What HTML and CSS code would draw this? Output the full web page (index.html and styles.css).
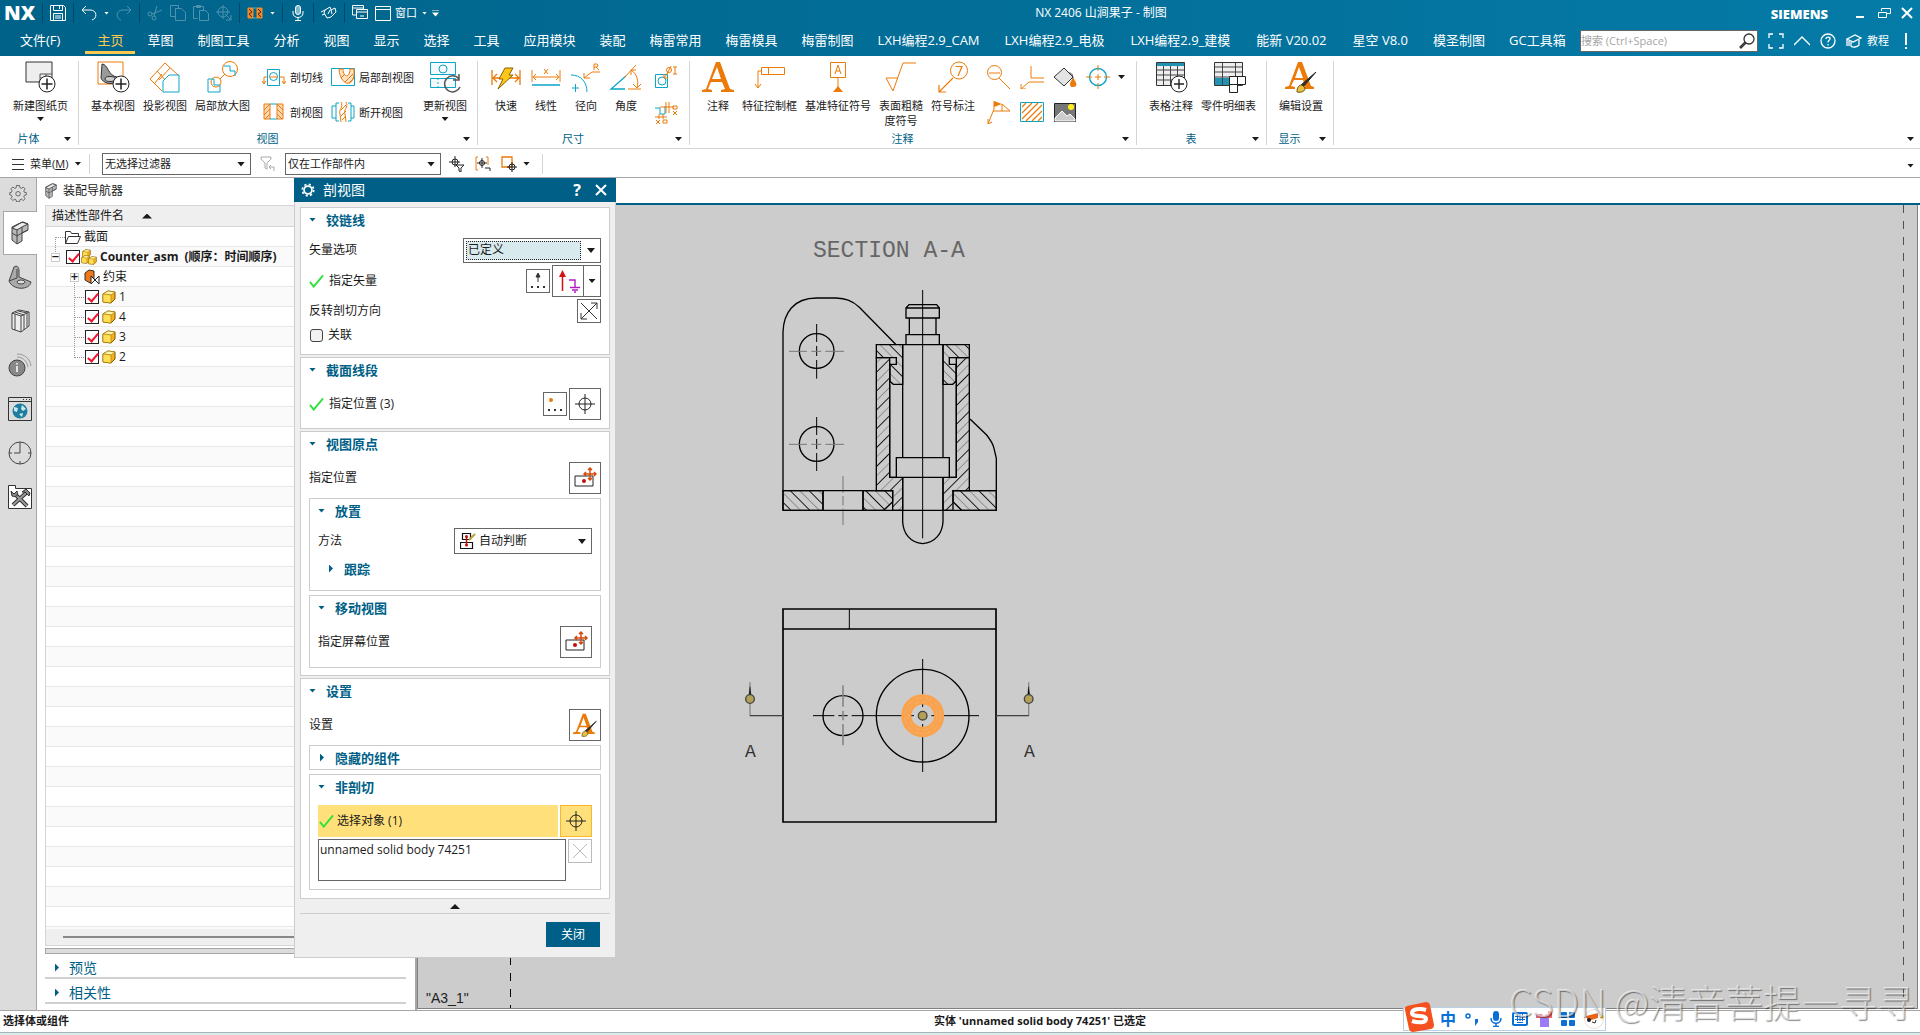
FILE: index.html
```html
<!DOCTYPE html>
<html lang="zh-CN">
<head>
<meta charset="utf-8">
<title>NX 2406 山涧果子 - 制图</title>
<link rel="stylesheet" href="styles.css">
</head>
<body>
<svg class="defs" aria-hidden="true">
  <symbol id="i-check" viewBox="0 0 16 14"><path d="M1 8l4 5L15 1" fill="none" stroke="#2fe23a" stroke-width="2"/></symbol>
  <symbol id="i-cube" viewBox="0 0 14 14"><path d="M1 4l5-3 7 1v7l-4 4-8-1z" fill="#f2b31c" stroke="#7d5500"/><path d="M1 4l5-3 7 1-4 3z" fill="#fff3a8" stroke="#a87800" stroke-width=".6"/><path d="M1 4l8 1v8l-8-1z" fill="#ffdf57" stroke="#a87800" stroke-width=".6"/></symbol>
  <symbol id="i-cross" viewBox="0 0 24 24"><g fill="none" stroke="#222"><circle cx="12" cy="12" r="6"/><path d="M12 2v20M2 12h20"/></g></symbol>
  <symbol id="i-cubes" viewBox="0 0 18 24"><path d="M1 11v8l5 4 5-3v-8l6-3V3l-5-2-5 2-6 3z" fill="#b9b9b9" stroke="#444"/><path d="M2 7l9-5 5 1-10 5z" fill="#eee"/><path d="M1 7l5-3 5-3 6 2-6 3v6l-5 3-5-3M6 15v8M11 6l-5 3-5-2M6 9v6M11 12l6-3" fill="none" stroke="#444"/></symbol>
  <symbol id="i-brushA" viewBox="0 0 32 32"><path d="M0 28v-2l4-1L13 1h4l9 24 3 1v2H16v-2l4-1-2-6H9l-3 6 4 1v2zM10 17h8L14 6z" fill="#ec7a08" fill-rule="evenodd"/><path d="M31 11L18 26l-2-2z" fill="#333" stroke="#222"/><path d="M12 31c0-5 2-7 5-7l3 3c0 3-3 5-8 4z" fill="#e8c042" stroke="#6b5310"/></symbol>
  <symbol id="i-move" viewBox="0 0 24 22"><path d="M2 9h18v10H2z" fill="#fff" stroke="#222"/><circle cx="11" cy="14" r="2" fill="#c40d0d"/><path d="M17 1v12M11 7h12M15 3l2-2 2 2M15 11l2 2 2-2M13 5l-2 2 2 2M21 5l2 2-2 2" fill="none" stroke="#d8480d" stroke-width="1.5"/></symbol>
</svg>

<header class="top">
  <div class="titlebar">
    <span class="brand">NX</span>
    <div class="quick">
      <i class="vsep"></i>
      <button aria-label="保存"><svg viewBox="0 0 16 16"><path d="M.5.5h13l2 2v13H.5zM3.5.5v5h9v-5M9.500 1v3M3.500 15V8.500h9V15M5 11h6M5 13h6"/></svg></button>
      <i class="vsep"></i>
      <button aria-label="撤消"><svg viewBox="0 0 16 16"><path d="M5 1L1 5l4 4M1 5h8c8 0 7 9 2 10"/></svg></button>
      <i class="dd light"></i>
      <button aria-label="重做" class="dim"><svg viewBox="0 0 16 16"><path d="M11 1l4 4-4 4M15 5H7c-8 0-7 9-2 10"/></svg></button>
      <i class="vsep"></i>
      <button aria-label="剪切" class="dim"><svg viewBox="0 0 16 16"><circle cx="3" cy="9" r="2"/><circle cx="7" cy="13" r="2"/><path d="M5 9l10-4M7 11l3-10"/></svg></button>
      <button aria-label="复制" class="dim"><svg viewBox="0 0 16 16"><path d="M5.500 11.500h-5V.5h8v3M5.500 3.500h6l4 4v8h-10z"/></svg></button>
      <button aria-label="粘贴" class="dim"><svg viewBox="0 0 16 16"><path d="M4.500 13.500h-4v-12h10v4M3.500.5h4v2h-4zM6.500 5.500h6l3 3v7h-9z"/></svg></button>
      <button aria-label="重复" class="dim"><svg viewBox="0 0 16 16"><circle cx="7" cy="7" r="5"/><path d="M7 0v14M0 7h14M9 9l6 6v-5M15 15h-5"/></svg></button>
      <i class="vsep"></i>
      <button aria-label="剖视图"><svg viewBox="0 0 16 16"><path d="M1 3h5v10H1zM10 3h5v10h-5z" fill="#f58220" stroke="#fa8c1d"/><path d="M6 3h4M6 13h4" stroke="#1dc0e8"/><path d="M2 4l3 3-3 2 3 3M11 4l3 3-3 2 3 3" stroke="#333"/></svg></button>
      <i class="dd light"></i>
      <i class="vsep"></i>
      <button aria-label="语音"><svg viewBox="0 0 16 16"><rect x="5.500" y=".5" width="5" height="9" rx="2.500" fill="#7fb7cd"/><path d="M3 6v2c0 6 10 6 10 0V6M8 12v3M5 15.500h6"/></svg></button>
      <i class="vsep"></i>
      <button aria-label="触控"><svg viewBox="0 0 16 16"><path d="M4 5l5-3 1 3 4-2 1 4-5 5-4 1-3-5zM0 7l4-2M1 10l3-1M9 5L7 9M10 5l1 4"/></svg></button>
      <i class="vsep"></i>
      <button aria-label="切换窗口"><svg viewBox="0 0 16 16"><path d="M4 10H.5V.5h11V4M.5 3h11M4.500 4.500h11v9h-11zM4.500 7h11M8 11h4"/></svg></button>
      <button class="win" aria-label="窗口"><svg viewBox="0 0 16 16"><path d="M.5 1.500h15v14H.5zM.5 4.500h15"/></svg>窗口</button>
      <i class="dd light"></i><i class="dd light bar"></i>
    </div>
    <h1>NX 2406 山涧果子 - 制图</h1>
    <div class="sys">
      <b>SIEMENS</b>
      <button aria-label="最小化"><svg viewBox="0 0 14 14"><path d="M2 11h8" stroke-width="2"/></svg></button>
      <button aria-label="还原"><svg viewBox="0 0 14 14"><path d="M4.500 5V2.500h9v5H10M1.500 6.500h8v5h-8z"/></svg></button>
      <button aria-label="关闭窗口"><svg viewBox="0 0 14 14"><path d="M2 2l10 10M12 2L2 12" stroke-width="2"/></svg></button>
    </div>
  </div>
  <nav class="tabs">
    <a href="#" class="file">文件(F)</a><a href="#" class="on">主页</a><a href="#">草图</a><a href="#">制图工具</a><a href="#">分析</a><a href="#">视图</a><a href="#">显示</a><a href="#">选择</a><a href="#">工具</a><a href="#">应用模块</a><a href="#">装配</a><a href="#">梅雷常用</a><a href="#">梅雷模具</a><a href="#">梅雷制图</a><a href="#">LXH编程2.9_CAM</a><a href="#" class="wide">LXH编程2.9_电极</a><a href="#" class="wide">LXH编程2.9_建模</a><a href="#" class="wide">能新 V20.02</a><a href="#" class="wide">星空 V8.0</a><a href="#">模圣制图</a><a href="#">GC工具箱</a>
    <div class="help">
      <label class="search"><input type="text" placeholder="搜索 (Ctrl+Space)" aria-label="搜索"><svg viewBox="0 0 16 16"><circle cx="10" cy="6" r="5" fill="none" stroke="#333"/><path d="M6 9l-5 5 1 1 5-5" fill="none" stroke="#333"/></svg></label>
      <button aria-label="全屏"><svg viewBox="0 0 16 16"><path d="M1 5V1h4M11 1h4v4M15 11v4h-4M5 15H1v-4"/></svg></button>
      <button aria-label="折叠功能区"><svg viewBox="0 0 16 16"><path d="M0 12l8-8 8 8"/></svg></button>
      <button aria-label="帮助"><svg viewBox="0 0 16 16"><circle cx="8" cy="8" r="7"/><path d="M6 6c0-3 5-2 4 0-1 2-2 1-2 3.500M8 11v1.500"/></svg></button>
      <button aria-label="教程" class="tut"><svg viewBox="0 0 16 16"><path d="M1 6l8-4 6 3-8 4zM5 9v4c2 2 6 1 8-1V7M1 6v7M3 8v5"/></svg>教程</button>
      <button aria-label="提示" class="bang"><svg viewBox="0 0 4 16"><path d="M2 0v12M2 14v2" stroke-width="2"/></svg></button>
    </div>
  </nav>
</header>

<section class="ribbon">
  <div class="group">
    <div class="tools first">
      <button class="tool"><svg viewBox="0 0 32 32"><path d="M1 1h26v20H1z" fill="#eee" stroke="#333"/><path d="M15 21v-8h12M15 17h12M21 13v8" fill="none" stroke="#555"/><circle cx="22" cy="23" r="8" fill="#fff" stroke="#222"/><path d="M22 17.500v11M16.500 23h11" stroke="#222" stroke-width="1.500"/></svg><span>新建图纸页</span><i class="dd"></i></button>
    </div>
    <div class="foot"><span>片体</span><i class="dd"></i></div>
  </div>
  <div class="group">
    <div class="tools">
      <button class="tool"><svg viewBox="0 0 32 32"><path d="M1 1h25v22H1z" fill="none" stroke="#ec7a08"/><path d="M5 3c6 0 6 12 15 13v4c-6 5-14 2-16-3z" fill="#9a9a9a" stroke="#333"/><ellipse cx="13" cy="18" rx="5" ry="2.500" fill="#ccc" stroke="#333"/><circle cx="24" cy="23" r="8" fill="#fff" stroke="#222"/><path d="M24 17.500v11M18.500 23h11" stroke="#222" stroke-width="1.500"/></svg><span>基本视图</span></button>
      <button class="tool"><svg viewBox="0 0 32 32" fill="none"><path d="M1 18L16 2l13 12-4 3M1 18l12 12M8 10l12 13M13 13l-7 9M21 7L10 19" stroke="#ec7a08"/><path d="M14 20l6-6h10v17H14z" fill="#fff" stroke="#0aa5c8"/></svg><span>投影视图</span></button>
      <button class="tool"><svg viewBox="0 0 32 32" fill="none"><circle cx="23" cy="8" r="7.500" stroke="#ec7a08"/><circle cx="9" cy="21" r="5" stroke="#ec7a08"/><path d="M13 18l5-5" stroke="#ec7a08"/><path d="M17 5h6v5h5v5M1 31V18h6v6h6v7z" stroke="#0aa5c8"/></svg><span>局部放大图</span></button>
      <div class="pair">
        <button><svg viewBox="0 0 24 24" fill="none"><path d="M5.500 4.500h12v16h-12z" stroke="#0aa5c8"/><circle cx="11.500" cy="11.500" r="4" stroke="#0aa5c8"/><path d="M5 12H2v6M18 12h4v6M0 16l2 3 2-3M20 16l2 3 2-3M8 12h8" stroke="#ec7a08"/></svg>剖切线</button>
        <button><svg viewBox="0 0 24 24" fill="none"><path d="M2 4h6v15H2zM15 4h6v15h-6z" fill="#ffd9b5" stroke="#ec7a08"/><path d="M2 10l6-6M2 15l6-6M3 19l5-5M15 4l6 6M15 9l6 6M15 14l5 5" stroke="#ec7a08"/><path d="M8 4h7M8 19h7" stroke="#0aa5c8"/></svg>剖视图</button>
      </div>
      <div class="pair">
        <button><svg viewBox="0 0 24 24" fill="none"><path d="M.5 3.500h23v17H.5z" stroke="#0aa5c8"/><path d="M8 4c1 16 14 20 15 5V4h-4c0 9-7 9-7 0z" fill="#ffe3c8" stroke="#ec7a08"/><path d="M10 13l4-4M14 17l8-8M18 18l5-5" stroke="#ec7a08"/></svg>局部剖视图</button>
        <button><svg viewBox="0 0 24 24" fill="none"><path d="M8 3H5v18h3M5 6H1v12h4M17 3h3v18h-3M20 6h3v12h-3" stroke="#0aa5c8"/><path d="M10 2c3 5-3 8-1 12l1 8M15 2c3 5-3 8-1 12l1 8M10 10l5-5M10 16l5-5M11 20l4-4" stroke="#ec7a08"/></svg>断开视图</button>
      </div>
      <button class="tool"><svg viewBox="0 0 32 32" fill="none"><path d="M1.500 1.500h25v12h-25zM1.500 17.500h25v9h-25z" fill="#f5fbfd" stroke="#0aa5c8"/><circle cx="14" cy="8" r="4" stroke="#0aa5c8"/><path d="M9 17v9" stroke="#0aa5c8" stroke-dasharray="2 2"/><path d="M30 18a8 8 0 1 0 1 8M30 13v6h-6" stroke="#555" stroke-width="1.500"/></svg><span>更新视图</span><i class="dd"></i></button>
    </div>
    <div class="foot"><span>视图</span><i class="dd"></i></div>
  </div>
  <div class="group">
    <div class="tools">
      <button class="tool"><svg viewBox="0 0 32 32" fill="none"><path d="M2 9v15M30 9v15M3 17h26M7 13l-4 4 4 4M25 13l4 4-4 4" stroke="#ec7a08" stroke-width="1.300"/><path d="M15 7h8l-4 7h4L8 28l5-10H9z" fill="#ffc61a" stroke="#8a6000"/></svg><span>快速</span></button>
      <button class="tool"><svg viewBox="0 0 32 32" fill="none"><path d="M2 9v12M30 9v12M3 16h26M6 13l-3 3 3 3M26 13l3 3-3 3M14 8l4 5M18 8l-4 5" stroke="#ec7a08"/><path d="M2 24h28" stroke="#0aa5c8" stroke-width="1.500"/></svg><span>线性</span></button>
      <button class="tool"><svg viewBox="0 0 32 32" fill="none"><path d="M1 14c10 0 16 7 16 17M2 27h7M5.500 23v8" stroke="#0aa5c8"/><path d="M14 17l8-6h8M14 12v5h6M24 9V3h3l1 1-1 2h-3M26 6l3 3" stroke="#ec7a08"/></svg><span>径向</span></button>
      <button class="tool"><svg viewBox="0 0 32 32" fill="none"><path d="M16 15L1 28h14" stroke="#0aa5c8" stroke-width="1.300"/><path d="M14 17L26 4M21 9c6 4 8 11 6 18M21 14V9h5M23 23l4 4 4-4M18 28h13" stroke="#ec7a08"/></svg><span>角度</span></button>
      <div class="pair icons">
        <button aria-label="孔尺寸"><svg viewBox="0 0 24 24" fill="none"><path d="M1.500 9.500h12v13h-12z" stroke="#0aa5c8"/><circle cx="8" cy="16" r="4" stroke="#0aa5c8"/><path d="M10 13l4-5M10 9v4h4M21 2v7M19 2h4M19 9h4M13 9l4-8" stroke="#ec7a08"/><circle cx="15" cy="5" r="2.500" stroke="#ec7a08"/></svg></button>
        <button aria-label="坐标尺寸"><svg viewBox="0 0 24 24" fill="none"><path d="M1 8h5v6h5V6" stroke="#0aa5c8"/><path d="M12 2v11M15 2v11M6 7h14M1 17h12M5 14v5M9 14v5M19 6h4v3h-4zM19 11l4 4M23 11l-4 4M2 20l4 4M6 20l-4 4M9 20h4v3H9z" stroke="#ec7a08"/></svg></button>
      </div>
    </div>
    <div class="foot"><span>尺寸</span><i class="dd"></i></div>
  </div>
  <div class="group">
    <div class="tools">
      <button class="tool"><svg viewBox="0 0 32 32"><path d="M0 31v-2l4-1L14 1h4l10 27 4 1v2H19v-2l4-1-3-7H9l-3 7 4 1v2zM10 18h9L15 6z" fill="#ec7a08" fill-rule="evenodd"/></svg><span>注释</span></button>
      <button class="tool"><svg viewBox="0 0 32 32" fill="none"><path d="M7.500 6.500h23v7h-23zM14.500 7v6M7 10H4v17M1 23l3 4 3-4" stroke="#ec7a08"/></svg><span>特征控制框</span></button>
      <button class="tool"><svg viewBox="0 0 32 32" fill="none"><path d="M8.500 1.500h15v15h-15zM16 17v9M13 13l3-9 3 9M14 10h4" stroke="#ec7a08"/><path d="M11 31l5-6 5 6z" fill="#ec7a08"/></svg><span>基准特征符号</span></button>
      <button class="tool"><svg viewBox="0 0 32 32" fill="none"><path d="M1 17h12M1 17l7 13L18 2h13" stroke="#ec7a08"/></svg><span>表面粗糙<br>度符号</span></button>
      <button class="tool"><svg viewBox="0 0 32 32" fill="none"><circle cx="22" cy="9.500" r="8.500" stroke="#ec7a08"/><path d="M18.500 5.500H25L21 15M16 17L2 31M2 24v7h7" stroke="#ec7a08" stroke-width="1.200"/></svg><span>符号标注</span></button>
      <div class="pair icons">
        <button aria-label="目标点"><svg viewBox="0 0 24 24" fill="none"><circle cx="7.500" cy="7.500" r="7" stroke="#ec7a08"/><path d="M2 8h11M12 13l11 11" stroke="#ec7a08"/></svg></button>
        <button aria-label="焊接符号"><svg viewBox="0 0 24 24" fill="none"><path d="M1 24L7 9V1M6 11h17L15 4v7M1 19v5l4-2" stroke="#ec7a08"/><path d="M7 1l8 3-8 3z" fill="#ec7a08"/></svg></button>
      </div>
      <div class="pair icons">
        <button aria-label="中心线"><svg viewBox="0 0 24 24" fill="none"><path d="M11 1v12h13M24 17H9l-8 7M1 19v5h5" stroke="#ec7a08"/></svg></button>
        <button aria-label="剖面线"><svg viewBox="0 0 24 24" fill="none"><path d="M.5 2.500h23v19H.5z" stroke="#0aa5c8"/><path d="M2 7l4-4M2 13L12 3M2 19L18 3M6 21L22 5M12 21l10-10M18 21l4-4" stroke="#ec7a08" stroke-width="1.200"/></svg></button>
      </div>
      <div class="pair icons">
        <button aria-label="区域填充"><svg viewBox="0 0 24 24" fill="none"><path d="M1 12L11 3l9 9-9 9z" fill="#e4e4e4" stroke="#333"/><path d="M16 8c4 0 4 4 4 8" stroke="#333"/><path d="M20 13c5 6 4 9 0 9s-4-4 0-9z" fill="#ec7a08"/></svg></button>
        <button aria-label="图像"><svg viewBox="0 0 24 24"><path d="M1.500 3.500h21v18h-21z" fill="#777" stroke="#222"/><circle cx="18" cy="7" r="3" fill="#ffee17"/><path d="M2 18l7-7 5 5 3-2 5 5v2H2z" fill="#ccc" stroke="#fff"/></svg></button>
      </div>
      <div class="pair icons">
        <button aria-label="中心标记"><svg viewBox="0 0 24 24" fill="none"><circle cx="12" cy="12" r="8.500" stroke="#0aa5c8" stroke-width="1.400"/><path d="M12 0v6M12 18v6M0 12h6M18 12h6M12 9v6M9 12h6" stroke="#ec7a08"/></svg></button>
      </div>
      <i class="dd more"></i>
    </div>
    <div class="foot"><span>注释</span><i class="dd"></i></div>
  </div>
  <div class="group">
    <div class="tools">
      <button class="tool"><svg viewBox="0 0 32 32"><path d="M1.500 1.500h28v23h-28z" fill="#eee" stroke="#333"/><path d="M2 2h27v3H2z" fill="#2292b3"/><path d="M2 9h27M2 14h27M2 19h27M8.500 5v19M15.500 5v19M22.500 5v19" stroke="#444"/><circle cx="24" cy="23" r="8" fill="#fff" stroke="#222"/><path d="M24 18v10M19 23h10" stroke="#222" stroke-width="1.400"/></svg><span>表格注释</span></button>
      <button class="tool"><svg viewBox="0 0 32 32"><path d="M1.500 1.500h28v23h-28z" fill="#eee" stroke="#333"/><path d="M2 17h27v7H2z" fill="#2292b3"/><path d="M2 6h27M2 11h27M2 16h27M9.500 2v22M22.500 2v22" stroke="#444"/><path d="M16.500 15.500h16v8h-16zM24.500 15.500v8M16.500 23.500h8v8h-8z" fill="#fff" stroke="#222"/></svg><span>零件明细表</span></button>
    </div>
    <div class="foot"><span>表</span><i class="dd"></i></div>
  </div>
  <div class="group">
    <div class="tools">
      <button class="tool"><svg><use href="#i-brushA"/></svg><span>编辑设置</span></button>
    </div>
    <div class="foot"><span>显示</span><i class="dd"></i></div>
  </div>
  <i class="dd last"></i>
</section>

<section class="filterbar">
  <button class="menu"><svg viewBox="0 0 12 12"><path d="M0 1.500h12M0 6.500h12M0 11.500h12" stroke="#333"/></svg><span>菜单(<u>M</u>)</span><i class="dd"></i></button>
  <div class="combo c1"><select aria-label="选择过滤器"><option>无选择过滤器</option></select></div>
  <button aria-label="重置过滤器" class="ic fun"><svg viewBox="0 0 16 16" fill="none" stroke="#aaa"><path d="M1 1h10v2L7 7v6l-2-1V7L1 3zM9 11h5v4M11 9l-2 2 2 2"/></svg></button>
  <div class="combo c2"><select aria-label="选择范围"><option>仅在工作部件内</option></select></div>
  <button aria-label="点过滤" class="ic"><svg viewBox="0 0 16 16" fill="none" stroke="#222"><circle cx="6" cy="6" r="3"/><path d="M6 0v11M0 6h11"/><path d="M7 9h8l-3 3v4l-2-1v-3z" fill="#fff"/></svg></button>
  <button aria-label="捕捉" class="ic"><svg viewBox="0 0 16 16" fill="none" stroke="#222"><path d="M3 1H1v13h2M11 1h2v8" stroke="#ec7a08"/><circle cx="7" cy="7" r="2.500"/><path d="M7 2v10M2 7h10M10 12h5v3"/></svg></button>
  <button aria-label="框选" class="ic"><svg viewBox="0 0 16 16" fill="none"><path d="M1 1h10v10H1z" stroke="#ec7a08" stroke-width="1.300"/><circle cx="11" cy="11" r="3" stroke="#222"/><path d="M11 6v10M6 11h10" stroke="#222"/></svg></button>
  <i class="dd"></i><i class="line"></i><i class="dd last"></i>
</section>

<main class="work">
  <nav class="rail">
    <button aria-label="设置" class="gear"><svg viewBox="0 0 24 24" fill="none" stroke="#444"><path d="M10 2h4l.6 3 2 .8L19 4l2.500 2.500-1.800 2.600.8 2 2.500.4v3l-2.500.6-.8 2 1.800 2.500-2.500 2.400-2.500-1.700-2 .8-.5 2.500h-4l-.6-2.500-2-.8L5 22l-2.500-2.500L4.200 17l-.8-2L1 14.500v-3l2.400-.5.8-2L2.500 6.500 5 4l2.500 1.800 2-.8z"/><circle cx="12" cy="13" r="3"/></svg></button>
    <button aria-label="装配导航器" class="on"><svg><use href="#i-cubes"/></svg></button>
    <button aria-label="部件导航器"><svg viewBox="0 0 24 24" stroke="#444"><path d="M1 16L6 2c3-2 5 0 5 4v6l12 5c-1 8-18 9-22-1z" fill="#aaa"/><path d="M9 4v9l-8 3" fill="none"/><ellipse cx="13" cy="17" rx="4" ry="2" fill="#ddd"/></svg></button>
    <button aria-label="重用库"><svg viewBox="0 0 24 24" stroke="#444"><path d="M4 4l7-3 10 2v14l-8 6-9-3z" fill="#eee"/><path d="M4 4l9 3v16M13 7l8-4M7 3l9 3v15M10 2l9 2v14M7 5v16" fill="none"/></svg></button>
    <button aria-label="信息"><svg viewBox="0 0 24 24"><circle cx="9" cy="15" r="8" fill="#888" stroke="#444"/><path d="M9 13v6M9 10v1.500" stroke="#fff" stroke-width="1.500"/><path d="M9 4c6 0 10 4 11 10M9 1c8 0 13 5 14 12" fill="none" stroke="#999"/></svg></button>
    <button aria-label="浏览器"><svg viewBox="0 0 24 24"><path d="M.5.5h23v23H.5z" fill="#ddd" stroke="#333"/><path d="M1 4.500h22M15 2.500h1M18 2.500h1M21 2.500h1" stroke="#333"/><circle cx="12" cy="14" r="7.500" fill="#1f7d9e"/><path d="M6 10l4 1-1 4-3-1zM14 8l4 4-3 2-2-2zM11 17l4-1-1 4z" fill="#cde8f2"/></svg></button>
    <button aria-label="历史记录"><svg viewBox="0 0 24 24" fill="none" stroke="#444"><circle cx="12" cy="12" r="11"/><path d="M12 4v8H6M12 1v3M12 20v3M1 12h3M20 12h3"/></svg></button>
    <button aria-label="工具"><svg viewBox="0 0 24 24"><path d="M.5 23.500V.5h7v3h16v20z" fill="#fff" stroke="#333"/><path d="M5 20L18 8M7 9l12 12" stroke="#333" stroke-width="4"/><path d="M5 20L18 8M7 9l12 12" stroke="#999" stroke-width="2"/><path d="M3 6l3 3 3-3c2 4-1 7-5 5zM14 7l4-3 4 4-1 3-4-4z" fill="#888" stroke="#333"/></svg></button>
  </nav>

  <aside class="panel">
    <h2><svg><use href="#i-cubes"/></svg>装配导航器</h2>
    <div class="tree">
      <div class="th">描述性部件名<i></i></div>
      <ul>
        <li class="l1"><svg class="fold" viewBox="0 0 16 13"><path d="M.5 12.500V.5h5l1 2h7v3M.5 12.500l3-7h12l-3 7z" fill="#fff" stroke="#333"/></svg><span>截面</span></li>
        <li class="l0"><i class="exp">−</i><input type="checkbox" checked id="t0"><svg class="asm" viewBox="0 0 16 16"><use href="#i-cube" x="1" y="0" width="9" height="9"/><use href="#i-cube" x="0" y="6" width="9" height="9"/><use href="#i-cube" x="7" y="7" width="9" height="9"/></svg><label for="t0"><b>Counter_asm&ensp;(顺序：时间顺序)</b></label></li>
        <li class="l2"><i class="exp">+</i><svg class="asm" viewBox="0 0 16 16"><path d="M1 4l4-3 5 1v9l-4 3-5-3z" fill="#f07818" stroke="#333"/><path d="M7 7v8l8-8v8z" fill="#fff" stroke="#222"/></svg><span>约束</span></li>
        <li class="l3"><input type="checkbox" checked id="t1"><svg><use href="#i-cube"/></svg><label for="t1">1</label></li>
        <li class="l3"><input type="checkbox" checked id="t4"><svg><use href="#i-cube"/></svg><label for="t4">4</label></li>
        <li class="l3"><input type="checkbox" checked id="t3"><svg><use href="#i-cube"/></svg><label for="t3">3</label></li>
        <li class="l3"><input type="checkbox" checked id="t2"><svg><use href="#i-cube"/></svg><label for="t2">2</label></li>
      </ul>
      <div class="hscroll"><i></i></div>
    </div>
    <div class="split"></div>
    <button class="fold-row"><i class="rt"></i>预览</button>
    <button class="fold-row"><i class="rt"></i>相关性</button>
  </aside>

  <section class="view">
    <div class="viewhead"></div>
    <div class="canvas">
      <svg class="section" viewBox="0 0 780 1020" fill="none" stroke="#000" stroke-width="4">
        <defs>
          <pattern id="hf" width="40" height="20" patternUnits="userSpaceOnUse" patternTransform="rotate(45)"><path d="M10 0v20" stroke="#111" stroke-width="3"/><path d="M30 0v20" stroke="#777" stroke-width="2"/></pattern>
          <pattern id="hb" width="40" height="20" patternUnits="userSpaceOnUse" patternTransform="rotate(-45)"><path d="M10 0v20" stroke="#111" stroke-width="3"/><path d="M30 0v20" stroke="#777" stroke-width="2"/></pattern>
        </defs>
        <path d="M69 871V335C71 280 100 234 170 234H228C255 236 275 240 298 262L407 373"/>
        <circle cx="170" cy="393" r="52"/><circle cx="170" cy="672" r="52"/>
        <path d="M170 312v54M170 378v30M170 420v56M170 591v54M170 657v30M170 699v54" stroke-width="3"/>
        <path d="M87 394h54M154 394h30M196 394h56M87 673h54M154 673h30M196 673h56M249 768v50M249 828v28M249 866v49" stroke="#777" stroke-width="3"/>
        <path fill="url(#hb)" d="M69 812H189V871H69zM309 812H398V845L371 871H309zM579 812H709V871H605L579 845z"/>
        <path fill="url(#hb)" d="M349 374H428V493H400L390 484V433H409V413H349zM628 374H549V493H578L588 484V433H568V413H628z"/>
        <path fill="url(#hf)" d="M349 413H389V772H428V871H398V812H349zM628 413H589V772H549V871H579V812H628z"/>
        <path d="M69 871H709V715L702 685Q698 668 680 645L630 597M69 812H398M579 812H709M189 812V871M309 812V871"/>
        <path d="M428 374H549M428 374V905C430 940 450 968 488 971C526 968 547 940 549 905V374M389 772H589M389 493V772M589 493V772"/>
        <path d="M409 713H568V772H409z" fill="#ccc"/>
        <path d="M438 264H538V294H438zM438 264L447 254H530L538 264M448 294V344M528 294V344M438 373V344H538V373"/>
        <path d="M488 210V955" stroke-width="3"/>
      </svg>
      <svg class="plan" viewBox="0 0 960 750" fill="none" stroke="#000" stroke-width="4">
        <path d="M159 57H798V696H159zM159 117H798" stroke-width="5"/>
        <path d="M358 57V117" stroke-width="3"/>
        <circle cx="339" cy="377" r="60"/><circle cx="578" cy="377" r="139"/>
        <path d="M249 377h64M325 377h28M365 377h155M636 377h111M578 207v106M578 440v106" stroke-width="3"/>
        <path d="M339 286v64M339 363v28M339 402v64" stroke="#888" stroke-width="5"/>
        <circle cx="578" cy="377" r="49" stroke="#fba24c" stroke-width="31"/>
        <circle cx="578" cy="377" r="54" stroke="#e2b88c" stroke-width="2" stroke-dasharray="20 9"/>
        <circle cx="578" cy="377" r="43" stroke="#e2b88c" stroke-width="2" stroke-dasharray="16 9"/>
        <path d="M578 343v8M578 402v8M544 377h8M604 377h8" stroke-width="3"/>
        <path d="M60 277V377H159M896 277V377H798" stroke="#888"/>
        <path d="M60 377H159M798 377H896" stroke="#333" stroke-width="3"/>
        <path d="M60 290l3 26h-6zM896 290l3 26h-6z" fill="#000" stroke-width="1"/>
        <g fill="#b39f55" stroke="#444"><circle cx="60" cy="327" r="13"/><circle cx="896" cy="327" r="13"/><circle cx="578" cy="377" r="13"/></g>
      </svg>
      <span class="cad title">SECTION A-A</span>
      <span class="cad a1">A</span><span class="cad a2">A</span>
      <span class="sheet">"A3_1"</span>
      <i class="dash left"></i><i class="dash right"></i>
    </div>
  </section>

  <form class="dialog">
    <header><svg viewBox="0 0 16 16" fill="none" stroke="#fff"><circle cx="8" cy="8" r="4.500" stroke-width="2"/><circle cx="8" cy="8" r="6.500" stroke-width="2" stroke-dasharray="2.500 2.600"/></svg><h2>剖视图</h2><button type="button" aria-label="帮助">?</button><button type="button" aria-label="关闭对话框"><svg viewBox="0 0 12 12"><path d="M1 1l10 10M11 1L1 11" stroke="#fff" stroke-width="2"/></svg></button></header>
    <fieldset class="s1">
      <h3><i class="dn"></i>铰链线</h3>
      <div class="row r30"><label for="vec">矢量选项</label><div class="combo focus"><select id="vec"><option>已定义</option></select></div></div>
      <div class="row r32"><svg class="ck"><use href="#i-check"/></svg><span>指定矢量</span>
        <button type="button" class="b24" aria-label="矢量对话框"><svg viewBox="0 0 24 24"><path d="M12 13V5M10 8l2-4 2 4z" stroke="#333" fill="#333"/><path d="M5 17h2v2H5zM11 17h2v2h-2zM17 17h2v2h-2z" fill="#333"/></svg></button>
        <div class="duo"><button type="button" aria-label="自动判断矢量"><svg viewBox="0 0 30 30"><path d="M9.500 25V10" stroke="#d31212" stroke-width="1.500"/><path d="M6 11l3.500-7L13 11z" fill="#d31212"/><path d="M16 14h6v7M17 21.500h10M19 24h6M21 26h2" stroke="#b01cc0" fill="none" stroke-width="1.400"/></svg></button><button type="button" aria-label="更多矢量"><i class="dd"></i></button></div></div>
      <div class="row r28"><span>反转剖切方向</span><button type="button" class="b24" aria-label="反向"><svg viewBox="0 0 24 24"><path d="M4 4l16 16M20 4L4 20M14 4h6v6M4 14v6h6" fill="none" stroke="#333"/></svg></button></div>
      <div class="row r20"><input type="checkbox" id="assoc" class="plain"><label for="assoc">关联</label></div>
    </fieldset>
    <fieldset class="s2">
      <h3><i class="dn"></i>截面线段</h3>
      <div class="row r40"><svg class="ck"><use href="#i-check"/></svg><span>指定位置 (3)</span>
        <button type="button" class="b24" aria-label="点对话框"><svg viewBox="0 0 24 24"><circle cx="8" cy="8" r="2" fill="#ec7a08"/><path d="M5 17h2v2H5zM11 17h2v2h-2zM17 17h2v2h-2z" fill="#333"/></svg></button>
        <button type="button" class="b32" aria-label="指定位置"><svg><use href="#i-cross"/></svg></button></div>
    </fieldset>
    <fieldset class="s3">
      <h3><i class="dn"></i>视图原点</h3>
      <div class="row r40"><span>指定位置</span><button type="button" class="b32" aria-label="视图位置"><svg><use href="#i-move"/></svg></button></div>
      <fieldset class="sub p1">
        <h3><i class="dn"></i>放置</h3>
        <div class="row r36"><label for="meth">方法</label><div class="combo meth"><svg viewBox="0 0 16 18"><path d="M2.500 1.500h8v6h-8zM.5 10.500h12v6H.5z" fill="#fff" stroke="#111" stroke-width="1.200"/><path d="M6.500 5v8" stroke="#c40d0d" stroke-width="1.500"/><circle cx="6.500" cy="4.500" r="1.500" fill="#c40d0d"/><circle cx="6.500" cy="13" r="1.500" fill="#c40d0d"/><path d="M9 8l6-6" stroke="#b8a138" stroke-width="2"/></svg><select id="meth"><option>自动判断</option></select></div></div>
        <h3 class="deep"><i class="rt"></i>跟踪</h3>
      </fieldset>
      <fieldset class="sub p2">
        <h3><i class="dn"></i>移动视图</h3>
        <div class="row r40"><span>指定屏幕位置</span><button type="button" class="b32" aria-label="屏幕位置"><svg><use href="#i-move"/></svg></button></div>
      </fieldset>
    </fieldset>
    <fieldset class="s4">
      <h3><i class="dn"></i>设置</h3>
      <div class="row r40"><span>设置</span><button type="button" class="b32" aria-label="设置"><svg><use href="#i-brushA"/></svg></button></div>
      <fieldset class="sub p3"><h3><i class="rt"></i>隐藏的组件</h3></fieldset>
      <fieldset class="sub p4">
        <h3><i class="dn"></i>非剖切</h3>
        <div class="pick"><div class="hot"><svg class="ck"><use href="#i-check"/></svg><span>选择对象 (1)</span></div><button type="button" class="b32 hotb" aria-label="选择对象"><svg><use href="#i-cross"/></svg></button></div>
        <div class="pick list"><select size="2" aria-label="已选对象"><option>unnamed solid body 74251</option></select><button type="button" class="b24 off" aria-label="移除"><svg viewBox="0 0 24 24"><path d="M5 5l14 14M19 5L5 19" stroke="#bbb"/></svg></button></div>
      </fieldset>
    </fieldset>
    <div class="collapse"><i></i></div>
    <footer><button type="button">关闭</button></footer>
  </form>
</main>

<footer class="status"><span>选择体或组件</span><span class="msg">实体 'unnamed solid body 74251' 已选定</span><span></span></footer>

<div class="ime">
  <svg class="sogou" viewBox="0 0 30 30"><path d="M1 8Q0 5 3 4L22 0q3 0 4 3l4 20q0 3-3 4L9 30q-3 0-4-3z" fill="#f4511e"/><path d="M22 8c-6-2-14-1-14 3 0 5 14 1 14 6 0 4-8 4-14 2" fill="none" stroke="#fff" stroke-width="4"/></svg>
  <b>中</b>
  <svg viewBox="0 0 16 16"><circle cx="4" cy="5" r="2" fill="none" stroke="#0a6fd6" stroke-width="1.500"/><path d="M11 8h3v3l-3 4z" fill="#0a6fd6"/></svg>
  <svg viewBox="0 0 16 16"><rect x="5" y="0" width="6" height="10" rx="3" fill="#0a6fd6"/><path d="M3 7c0 7 10 7 10 0M8 12v3M5 15.500h6" fill="none" stroke="#0a6fd6" stroke-width="1.500"/></svg>
  <svg viewBox="0 0 16 16" fill="none" stroke="#0a6fd6"><rect x="1" y="2" width="14" height="12" rx="1" stroke-width="2"/><path d="M3 5.500h10M3 8.500h10M5.500 3v7M8 3v7M10.500 3v7M5 11.500h6"/></svg>
  <svg viewBox="0 0 16 16"><path d="M0 3h5l3 2 3-2h5v4h-3v9H4V7H0z" fill="#9a7cf8"/><path d="M0 3h5l3 2 3-2h5v4H0z" fill="#f4637a"/><circle cx="14" cy="2" r="2" fill="#e8432d"/></svg>
  <svg viewBox="0 0 16 16" fill="#0a6fd6"><rect x="1" y="1" width="6" height="6" rx="1"/><rect x="9" y="1" width="6" height="6" rx="1"/><rect x="1" y="9" width="6" height="6" rx="1"/><rect x="9" y="9" width="6" height="6" rx="1"/></svg>
  <svg viewBox="0 0 20 20" class="ava"><circle cx="10" cy="10" r="9.500" fill="#fff" stroke="#edd"/><path d="M2 7l12-3v5L4 12z" fill="#e8641b"/><circle cx="5" cy="11" r="2" fill="#222"/><path d="M8 13l3 1 1-3" fill="none" stroke="#333"/><path d="M18 5l1 2 1 1-1 1-1 2-1-2-1-1 1-1z" fill="#fc3"/></svg>
</div>
<div class="watermark">CSDN @清音菩提—寻寻</div>
</body>
</html>
```

FILE: styles.css
```css
* { box-sizing: border-box; }
body {
  margin: 0;
  min-height: 100vh;
  display: flex;
  flex-direction: column;
  position: relative;
  overflow-x: hidden;
  font-family: "Open Sans", "Noto Sans CJK SC", sans-serif;
  font-size: 12px;
  line-height: 16px;
  color: #1a1a1a;
  background: #fff;
}
button, select, input { font: inherit; color: inherit; }
button { border: 0; background: none; padding: 0; }
svg { display: block; flex: none; }
h1, h2, h3, ul, fieldset { margin: 0; padding: 0; border: 0; font-weight: 400; list-style: none; min-width: 0; }
.defs { position: absolute; width: 0; height: 0; }

/* small triangles */
.dd { display: block; flex: none; width: 7px; height: 4px; background: #1a1a1a; clip-path: polygon(0 0, 100% 0, 50% 100%); }
.dd.light { background: #fff; width: 5px; height: 3px; }
.dd.bar { width: 7px; height: 7px; clip-path: polygon(0 0, 100% 0, 100% 1px, 0 1px, 0 3px, 100% 3px, 50% 100%, 0 3px); }
.dn { display: block; width: 7px; height: 4px; background: #005f87; clip-path: polygon(0 0, 100% 0, 50% 100%); }
.rt { display: block; width: 4px; height: 8px; background: #005f87; clip-path: polygon(0 0, 100% 50%, 0 100%); }

/* header */
.top { background: linear-gradient(90deg, #006289, #057ba7); color: #fff; }
.titlebar { display: grid; grid-template-columns: 1fr auto 1fr; align-items: center; height: 26px; }
.titlebar .brand { grid-area: 1 / 1; padding-left: 4px; font: 800 20px/26px "Open Sans", sans-serif; }
.quick { grid-area: 1 / 1; display: flex; align-items: center; gap: 7px; padding-left: 42px; }
.quick svg { width: 16px; height: 16px; fill: none; stroke: #fff; }
.quick .dim { opacity: .3; }
.quick .win { display: flex; gap: 4px; font-size: 11px; }
.quick .win + .dd, .quick .bar { margin-left: -2px; }
.vsep { width: 1px; height: 20px; background: #00486a; }
.titlebar h1 { font-size: 12px; grid-column: 2; padding-left: 282px; }
.sys { grid-column: 3; display: flex; justify-content: flex-end; align-items: center; gap: 9px; padding-right: 6px; }
.sys b { font: 800 13px/16px "Open Sans", sans-serif; margin-right: 17px; padding-top: 2px; }
.sys svg { width: 14px; height: 14px; fill: none; stroke: #fff; }
.tabs { display: flex; height: 30px; font-size: 13px; line-height: 29px; }
.tabs a { color: #fff; text-decoration: none; padding: 0 12px; white-space: nowrap; }
.tabs .file { padding: 0 25px 0 20px; }
.tabs .wide { padding: 0 13px; }
.tabs .on { color: #ffc94d; border-bottom: 3px solid #ffc94d; height: 28px; }
.help { margin-left: auto; display: flex; align-items: center; gap: 10px; padding: 0 12px 0 0; }
.help svg { width: 16px; height: 16px; fill: none; stroke: #fff; stroke-width: 1.3; }
.help .tut { display: flex; gap: 5px; font-size: 11px; line-height: 16px; }
.help .bang svg { width: 4px; }
.help .bang { margin-left: 5px; }
.search { display: flex; align-items: center; width: 178px; height: 22px; border: 1px solid #666; background: #fff; padding-right: 2px; line-height: 16px; }
.search input { border: 0; outline: 0; flex: 1; min-width: 0; padding: 0; font-size: 11px; background: none; color: #333; }
.search input::placeholder { color: #a5a5a5; }

/* ribbon */
.ribbon { display: flex; padding: 5px 0 3px; border-bottom: 1px solid #d5d5d5; font-size: 11px; line-height: 15px; }
.group { display: flex; flex-direction: column; justify-content: space-between; height: 84px; border-right: 1px solid #d5d5d5; }
.tools { display: flex; padding: 0 6px 0 8px; }
.tools.first { padding-left: 9px; }
.tool { display: flex; flex-direction: column; align-items: center; min-width: 40px; padding: 0 4px; line-height: 15px; }
.tool span { margin-top: 5px; white-space: nowrap; }
.tool svg { width: 32px; height: 32px; overflow: visible; }
.tool .dd { margin-top: 4px; }
.pair { display: flex; flex-direction: column; gap: 11px; padding: 4px 4px 0; }
.tool + .pair { margin-left: 4px; }
.pair + .tool { margin-left: 1px; }
.pair button { display: flex; align-items: center; gap: 4px; height: 24px; white-space: nowrap; }
.pair svg { width: 24px; height: 24px; }
.pair.icons { width: 33px; }
.more { margin: 14px 5px 0 3px; }
.foot { display: flex; align-items: center; color: #005f87; line-height: 12px; }
.foot span { flex: 1; text-align: center; }
.foot .dd { margin: 0 7px; }
.ribbon .last { margin: 76px 6px 0 auto; }

/* filter bar */
.filterbar { display: flex; align-items: center; height: 29px; border-bottom: 1px solid #a6a6a6; font-size: 11px; padding: 1px 6px 0 0; }
.menu { display: flex; align-items: center; gap: 6px; padding: 0 7px 0 12px; height: 20px; border-right: 1px solid #d5d5d5; width: 90px; white-space: nowrap; }
.menu svg { width: 12px; height: 12px; }
.ic svg { width: 16px; height: 16px; }
.ic { margin: 0 2px 0 8px; }
.filterbar .fun { margin: 0 9px; }
.filterbar > .dd { margin: 0 12px 0 4px; }
.filterbar > .last { margin: 4px 0 0 auto; }
.filterbar .line { width: 1px; height: 20px; background: #d5d5d5; }
.combo { position: relative; display: flex; align-items: center; border: 1px solid #666; background: #fff; }
.combo::after { content: ""; position: absolute; right: 5px; top: 50%; margin-top: -2px; width: 8px; height: 5px; background: #1a1a1a; clip-path: polygon(0 0, 100% 0, 50% 100%); pointer-events: none; }
.combo select { appearance: none; border: 0; outline: 0; background: none; width: 100%; height: 100%; padding: 0 20px 0 2px; }
.c1 { width: 149px; height: 22px; margin-left: 12px; }
.c2 { width: 156px; height: 22px; }

/* work area */
.work { flex: 1; display: grid; grid-template-columns: 37px 380px 1fr; position: relative; min-height: 800px; }
.rail { background: #dcdcdc; border-right: 1px solid #a6a6a6; }
.rail button { display: flex; align-items: center; justify-content: center; width: 36px; height: 44px; padding-left: 3px; }
.rail svg { width: 24px; height: 24px; }
.rail .gear { height: 33px; padding: 0 0 3px; }
.rail .gear svg { width: 18px; height: 18px; }
.rail .on { background: #fff; border: 1px solid #a6a6a6; border-right: 0; margin-left: 3px; width: 34px; padding: 0 2px 0 0; }
.panel { display: flex; flex-direction: column; padding: 0 9px 6px 8px; border-right: 2px solid #a6a6a6; min-width: 0; }
.panel h2 { display: flex; align-items: center; gap: 6px; height: 27px; font-size: 12px; padding-bottom: 2px; }
.panel h2 svg { width: 12px; height: 16px; }
.tree { flex: 1; display: flex; flex-direction: column; border: 1px solid #d5d5d5; }
.th { display: flex; align-items: center; gap: 18px; height: 21px; padding-left: 6px; background: #efefef; border-bottom: 1px solid #d5d5d5; }
.th i { width: 10px; height: 5px; background: #1a1a1a; clip-path: polygon(50% 0, 100% 100%, 0 100%); }
.tree ul { flex: 1; background: repeating-linear-gradient(#fff 0 19px, #e8e8e8 19px 20px, #fafafa 20px 39px, #e8e8e8 39px 40px); }
.tree li { display: flex; align-items: center; height: 20px; white-space: nowrap; position: relative; }
.tree li svg { width: 14px; height: 14px; margin: 0 3px; }
.tree .asm { width: 16px; height: 16px; margin: 0 3px 0 1px; }
.tree .fold { width: 16px; height: 13px; margin: 0 3px 0 0; }
.l1 { padding-left: 19px; }
.l0 { padding-left: 5px; }
.l2 { padding-left: 24px; }
.l3 { padding-left: 39px; }
.l1::before { content: ""; position: absolute; left: 9px; top: 10px; width: 9px; height: 14px; border: dotted #999; border-width: 1px 0 0 1px; }
.l3::before { content: ""; position: absolute; left: 28px; top: -10px; width: 9px; height: 20px; border: dotted #999; border-width: 0 0 1px 1px; }
.exp { display: flex; align-items: center; justify-content: center; width: 9px; height: 9px; border: 1px solid #ccc; background: #fff; font: 700 10px/8px "DejaVu Sans", sans-serif; margin-right: 6px; z-index: 1; }
.l2 .exp { margin-right: 4px; }
.tree input { appearance: none; margin: 0; width: 14px; height: 14px; border: 1px solid #222; background: #fff; position: relative; }
.tree input::before { content: ""; position: absolute; left: 4px; top: 0; width: 4px; height: 9px; border: solid #f5122d; border-width: 0 2px 2px 0; transform: rotate(40deg); }
.hscroll { height: 16px; background: #efefef; padding: 7px 8px 0 17px; }
.hscroll i { display: block; height: 2px; background: #888; }
.split { height: 6px; margin-top: 2px; background: #dcdcdc; border: 1px solid #a6a6a6; }
.fold-row { display: flex; align-items: center; gap: 10px; height: 25px; padding: 4px 0 0 10px; border-bottom: 2px solid #d0d0d0; font-size: 14px; line-height: 18px; color: #005f87; }

/* drawing sheet */
.view { display: flex; flex-direction: column; min-width: 0; }
.viewhead { height: 27px; border-bottom: 2px solid #005f87; }
.canvas { position: relative; flex: 1; background: #ccc; border: 1px solid #808080; border-top: 0; margin: 0 2px 1px 0; overflow: hidden; }
.section { position: absolute; left: 342px; top: 15px; width: 260px; height: 340px; }
.plan { position: absolute; left: 312px; top: 385px; width: 320px; height: 250px; }
.cad { position: absolute; font-family: "Liberation Mono", monospace; color: #333; white-space: nowrap; }
.title { left: 395px; top: 34px; font-size: 23px; line-height: 24px; color: #666; }
.a1, .a2 { font-size: 18px; line-height: 20px; top: 537px; left: 327px; }
.a2 { left: 606px; }
.sheet { position: absolute; left: 8px; bottom: 1px; font: 14px/18px "Liberation Sans", sans-serif; color: #222; }
.dash { position: absolute; top: 0; bottom: 0; width: 1px; background: repeating-linear-gradient(#000 0 8px, transparent 8px 16px); }
.dash.left { left: 92px; }
.dash.right { right: 13px; opacity: .6; }

/* dialog */
.dialog { position: absolute; left: 294px; top: 0; width: 322px; background: #efefef; border: 1px solid #ccc; border-top: 0; padding: 0 5px; }
.dialog > header { display: flex; align-items: center; height: 24px; margin: 0 -6px 5px; padding: 0 9px 0 7px; background: #005f87; color: #fff; }
.dialog > header h2 { flex: 1; font-size: 14px; margin-left: 8px; }
.dialog > header svg { width: 14px; height: 14px; }
.dialog > header button { font-size: 16px; font-weight: 700; margin-left: 14px; }
.dialog > header button svg { width: 12px; height: 12px; }
.dialog > fieldset { background: #fff; border: 1px solid #ccc; padding: 0 8px; margin-bottom: 2px; }
.dialog h3 { display: flex; align-items: center; gap: 10px; height: 24px; padding-bottom: 1px; font-size: 13px; font-weight: 700; color: #005f87; }
.row { display: flex; align-items: center; }
.row > label, .row > span { flex: 1; }
.r20 { height: 20px; }
.r28 { height: 28px; }
.r30 { height: 30px; margin-top: 3px; }
.r32 { height: 32px; gap: 2px; }
.r36 { height: 36px; }
.r40 { height: 40px; gap: 2px; margin-top: 2px; }
.ck { width: 15px; height: 14px; }
.ck + span { margin-left: 3px; }
.b24, .b32 { display: flex; align-items: center; justify-content: center; width: 24px; height: 24px; border: 1px solid #666; background: #fff; }
.b32 { width: 32px; height: 32px; }
.b24 svg { width: 24px; height: 24px; margin: -1px; }
.b32 svg { width: 24px; height: 24px; }
.duo { display: flex; width: 49px; height: 32px; border: 1px solid #666; }
.duo button { flex: 1; display: flex; align-items: center; justify-content: center; border-left: 1px solid #666; }
.duo button:first-child { flex: none; width: 30px; border: 0; }
.duo svg { width: 30px; height: 30px; }
.focus { width: 138px; height: 25px; }
.focus select { width: 115px; height: 19px; margin-left: 2px; padding: 0 2px; background: #d9eaee; outline: 1px dotted #222; outline-offset: -1px; }
.meth { width: 138px; height: 26px; padding-left: 5px; gap: 1px; }
.meth svg { width: 16px; height: 18px; }
.plain { appearance: none; width: 13px; height: 13px; margin: 0 5px 0 1px; border: 1px solid #444; border-radius: 3px; background: #f2f2f2; }
.s1 { height: 148px; }
.s2 { height: 72px; }
.s3 { height: 245px; }
.s4 { height: 221px; }
.sub { border: 1px solid #ccc; padding: 0 8px; margin-bottom: 4px; }
.sub h3 .rt { margin: 0 1px 0 2px; }
.p1 { height: 93px; }
.p1 .deep { padding-left: 9px; height: 20px; }
.p2 { height: 73px; }
.p3 { height: 25px; }
.p4 { height: 116px; }
.pick { display: flex; gap: 2px; margin-top: 6px; }
.hot { flex: 1; display: flex; align-items: center; background: #ffe07a; padding-left: 1px; }
.hotb { background: #ffe07a; border-color: #f5b82e; }
.list { margin-top: 2px; }
.list select { flex: 1; height: 42px; min-width: 0; border: 1px solid #666; border-radius: 0; outline: 0; overflow: hidden; padding: 0; }
.list option { padding: 1px; min-height: 0; }
.off { border-color: #bbb; }
.collapse { height: 13px; border-bottom: 1px solid #ccc; display: flex; justify-content: center; padding-top: 3px; }
.collapse i { width: 10px; height: 5px; background: #1a1a1a; clip-path: polygon(50% 0, 100% 100%, 0 100%); }
.dialog > footer { display: flex; justify-content: flex-end; padding: 8px 10px 10px 0; }
.dialog > footer button { width: 54px; height: 25px; background: #005f87; color: #fff; }

/* status */
.status { display: grid; grid-template-columns: 1fr auto 1fr; align-items: center; height: 25px; padding: 0 3px 4px; border-top: 1px solid #a6a6a6; font-size: 11px; font-weight: 700; background: linear-gradient(#fff 0 21px, #a9b5b5 21px 22px, #d9ecf0 22px); }
.msg { padding-left: 160px; }

/* overlays */
.ime { position: absolute; right: 314px; bottom: 4px; height: 24px; display: flex; align-items: center; gap: 8px; background: #fff; border: 1px solid #b9cfe4; padding: 0 1px 0 36px; color: #0a6fd6; }
.ime b { font-size: 16px; line-height: 20px; }
.ime svg { width: 16px; height: 16px; }
.ime .sogou { position: absolute; left: 0; bottom: -2px; width: 30px; height: 30px; }
.ime .ava { width: 20px; height: 20px; }
.watermark { position: absolute; right: 5px; bottom: 12px; font: 300 38px/44px "Noto Sans CJK SC", sans-serif; color: rgba(255, 255, 255, .6); text-shadow: 1px 1px 1px rgba(0, 0, 0, .45); white-space: nowrap; pointer-events: none; }
```
